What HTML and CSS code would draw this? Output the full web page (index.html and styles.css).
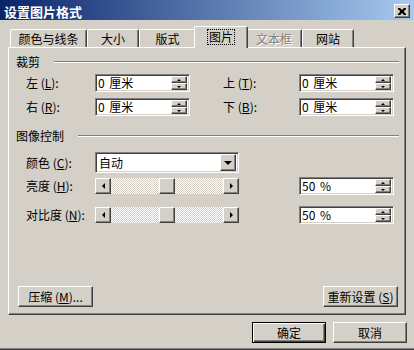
FILE: index.html
```html
<!DOCTYPE html>
<html lang="zh-CN">
<head>
<meta charset="utf-8">
<title>设置图片格式</title>
<link rel="stylesheet" href="styles.css">
</head>
<body>
<div class="window">
  <div class="titlebar">
    <span class="title">设置图片格式</span>
    <span class="close"><svg width="8" height="7" viewBox="0 0 8 7"><path d="M0 0h2l2 2l2-2h2v1l-2 2v1l2 2v1h-2l-2-2l-2 2h-2v-1l2-2v-1l-2-2z" fill="#000"/></svg></span>
  </div>
  <div class="tabs">
    <div class="tab w1">颜色与线条</div>
    <div class="tab w2">大小</div>
    <div class="tab w3">版式</div>
    <div class="tab active"><span class="focus">图片</span></div>
    <div class="tab w5 disabled">文本框</div>
    <div class="tab w6">网站</div>
  </div>
  <div class="panel">
    <div class="group-head head1"><span>裁剪</span><i class="rule"></i></div>
    <div class="row row1">
      <span class="lbl lbl-a">左 (<u>L</u>):</span>
      <div class="spin"><span class="val">0 厘米</span><span class="spinbtns"><b class="sb"><i class="up"></i></b><b class="sb"><i class="down"></i></b></span></div>
      <span class="lbl lbl-b">上 (<u>T</u>):</span>
      <div class="spin"><span class="val">0 厘米</span><span class="spinbtns"><b class="sb"><i class="up"></i></b><b class="sb"><i class="down"></i></b></span></div>
    </div>
    <div class="row row2">
      <span class="lbl lbl-a">右 (<u>R</u>):</span>
      <div class="spin"><span class="val">0 厘米</span><span class="spinbtns"><b class="sb"><i class="up"></i></b><b class="sb"><i class="down"></i></b></span></div>
      <span class="lbl lbl-b">下 (<u>B</u>):</span>
      <div class="spin"><span class="val">0 厘米</span><span class="spinbtns"><b class="sb"><i class="up"></i></b><b class="sb"><i class="down"></i></b></span></div>
    </div>
    <div class="group-head head2"><span>图像控制</span><i class="rule"></i></div>
    <div class="row row-combo">
      <span class="lbl lbl-a">颜色 (<u>C</u>):</span>
      <div class="combo"><span class="val">自动</span><b class="dd"><i class="down big"></i></b></div>
    </div>
    <div class="row row3">
      <span class="lbl lbl-a">亮度 (<u>H</u>):</span>
      <div class="scroll"><b class="arrow"><i class="left"></i></b><span class="track"><b class="thumb"></b></span><b class="arrow"><i class="right"></i></b></div>
      <div class="spin pct"><span class="val">50 %</span><span class="spinbtns"><b class="sb"><i class="up"></i></b><b class="sb"><i class="down"></i></b></span></div>
    </div>
    <div class="row row4">
      <span class="lbl lbl-a">对比度 (<u>N</u>):</span>
      <div class="scroll"><b class="arrow"><i class="left"></i></b><span class="track"><b class="thumb"></b></span><b class="arrow"><i class="right"></i></b></div>
      <div class="spin pct"><span class="val">50 %</span><span class="spinbtns"><b class="sb"><i class="up"></i></b><b class="sb"><i class="down"></i></b></span></div>
    </div>
    <div class="btnrow">
      <span class="btn">压缩 (<u>M</u>)...</span>
      <span class="btn">重新设置 (<u>S</u>)</span>
    </div>
  </div>
  <div class="footer">
    <span class="btn default">确定</span>
    <span class="btn">取消</span>
  </div>
</div>
</body>
</html>
```

FILE: styles.css
```css
* { box-sizing: border-box; }
html, body { margin: 0; padding: 0; }
body {
  width: 414px;
  height: 350px;
  overflow: hidden;
  font-family: "Noto Sans CJK SC", "Liberation Sans", sans-serif;
  font-size: 12px;
  color: #000;
  background: #d4d0c8;
}
u { text-decoration: underline; text-underline-offset: 1px; }
.window {
  width: 414px;
  height: 350px;
  background: #d4d0c8;
  display: flex;
  flex-direction: column;
  box-shadow: inset 0 -1px #404040, inset 0 -2px #808080;
}
.titlebar {
  height: 20px;
  flex: none;
  background: linear-gradient(to right, #0a246a, #a6caf0);
  display: flex;
  align-items: center;
  padding-left: 4px;
  padding-right: 4px;
}
.title {
  color: #fff;
  font-weight: bold;
  font-size: 13px;
  line-height: 15px;
  flex: 1;
  padding-top: 2px;
}
.close {
  width: 16px;
  height: 14px;
  margin-top: 2px;
  background: #d4d0c8;
  border: 1px solid;
  border-color: #fff #404040 #404040 #fff;
  box-shadow: inset -1px -1px #808080;
  display: flex;
  align-items: center;
  justify-content: center;
}
.close svg { display: block; }

/* Tabs */
.tabs {
  display: flex;
  align-items: flex-end;
  height: 21px;
  margin-top: 6px;
  padding-left: 10px;
  position: relative;
  z-index: 2;
}
.tab {
  height: 18px;
  border-top: 1px solid #fff;
  border-left: 1px solid #fff;
  border-right: 1px solid #404040;
  box-shadow: inset -1px 0 #808080;
  border-radius: 2px 2px 0 0;
  background: #d4d0c8;
  display: flex;
  align-items: center;
  justify-content: center;
  line-height: 14px;
  padding-top: 1px;
}
.w1 { width: 77px; }
.w2 { width: 52px; }
.w3 { width: 57px; }
.w5 { width: 56px; }
.w6 { width: 52px; }
.tab.active {
  width: 54px;
  height: 22px;
  margin: 0 -2px -1px -2px;
  position: relative;
  z-index: 3;
  padding-top: 0;
  padding-bottom: 2px;
}
.focus {
  outline: 1px dotted #000;
  outline-offset: 0;
  padding: 0 1px;
  line-height: 14px;
}
.tab.disabled {
  color: #808080;
  text-shadow: 1px 1px 0 #fff;
}

/* Panel */
.panel {
  width: 398px;
  height: 268px;
  margin-left: 8px;
  flex: none;
  border: 1px solid;
  border-color: #fff #404040 #404040 #fff;
  box-shadow: inset -1px -1px #808080;
  display: flex;
  flex-direction: column;
  position: relative;
  z-index: 1;
}
.group-head {
  display: flex;
  align-items: center;
  height: 14px;
  padding-left: 7px;
  line-height: 14px;
}
.head1 { margin-top: 7px; }
.head2 { margin-top: 13px; }
.rule {
  flex: 1;
  height: 2px;
  margin-left: 14px;
  margin-right: 6px;
  border-top: 1px solid #808080;
  border-bottom: 1px solid #fff;
}
.row {
  display: flex;
  align-items: center;
  height: 18px;
  padding-left: 17px;
}
.row1 { margin-top: 5px; }
.row2 { margin-top: 6px; }
.row-combo { margin-top: 9px; height: 21px; }
.row3 { margin-top: 4px; }
.row4 { margin-top: 11px; }
.lbl { line-height: 14px; white-space: nowrap; }
.lbl-a { width: 69px; }
.lbl-b { width: 76px; margin-left: 33px; }

.spin, .combo {
  position: relative;
  width: 95px;
  height: 18px;
  background: #fff;
  border: 1px solid;
  border-color: #808080 #fff #fff #808080;
  box-shadow: inset 1px 1px #404040, inset -1px -1px #d4d0c8;
  display: flex;
  align-items: center;
  padding: 2px 2px 2px 2px;
}
.pct { margin-left: 60px; }
.val { flex: 1; line-height: 14px; white-space: pre; word-spacing: 2px; }
.spinbtns {
  width: 16px;
  height: 14px;
  display: flex;
  flex-direction: column;
}
.sb, .dd, .arrow, .thumb {
  background: #d4d0c8;
  border: 1px solid;
  border-color: #fff #404040 #404040 #fff;
  box-shadow: inset -1px -1px #808080;
  display: flex;
  align-items: center;
  justify-content: center;
}
.sb { height: 7px; width: 16px; }
.up, .down, .left, .right { display: block; width: 0; height: 0; }
.up { border-left: 2px solid transparent; border-right: 2px solid transparent; border-bottom: 2px solid #000; }
.down { border-left: 2px solid transparent; border-right: 2px solid transparent; border-top: 2px solid #000; }
.down.big { border-left-width: 4px; border-right-width: 4px; border-top-width: 4px; }
.left { border-top: 3px solid transparent; border-bottom: 3px solid transparent; border-right: 3px solid #000; }
.right { border-top: 3px solid transparent; border-bottom: 3px solid transparent; border-left: 3px solid #000; }

.combo { width: 144px; height: 21px; padding-left: 3px; }
.dd { width: 16px; height: 17px; }

.scroll {
  width: 144px;
  height: 16px;
  display: flex;
}
.arrow { width: 16px; height: 16px; flex: none; }
.track {
  flex: 1;
  display: flex;
  padding-left: 48px;
  background-color: #fff;
  background-image: conic-gradient(#d4d0c8 25%, #fff 0 50%, #d4d0c8 0 75%, #fff 0);
  background-size: 2px 2px;
}
.thumb { width: 16px; height: 16px; }

.btnrow {
  margin-top: auto;
  margin-bottom: 7px;
  display: flex;
  justify-content: space-between;
  padding: 0 7px 0 9px;
}
.btn {
  width: 75px;
  height: 21px;
  background: #d4d0c8;
  border: 1px solid;
  border-color: #fff #404040 #404040 #fff;
  box-shadow: inset -1px -1px #808080;
  display: flex;
  align-items: center;
  justify-content: center;
  line-height: 14px;
  white-space: nowrap;
}
.footer {
  display: flex;
  justify-content: flex-end;
  gap: 7px;
  padding-right: 7px;
  margin-top: 7px;
}
.footer .btn { width: 74px; }
.btn.default {
  border: 1px solid #000;
  box-shadow: inset 1px 1px #fff, inset -1px -1px #404040, inset -2px -2px #808080;
}
```
